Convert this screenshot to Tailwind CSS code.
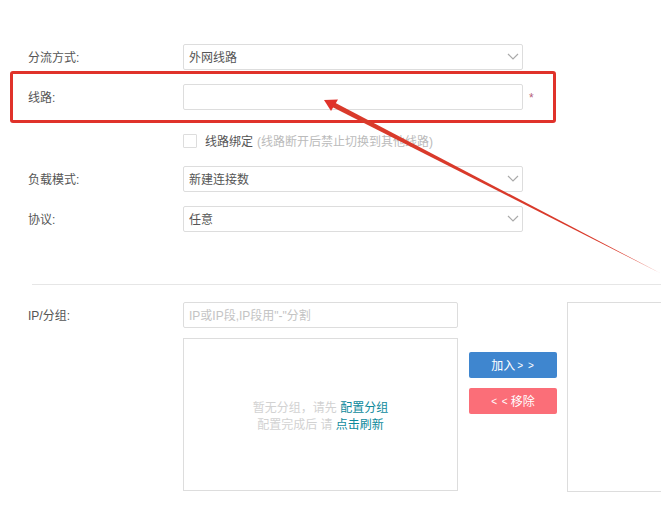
<!DOCTYPE html>
<html lang="zh-CN">
<head>
  <meta charset="UTF-8">
  <title>线路</title>
  <script src="https://cdn.jsdelivr.net/npm/@tailwindcss/browser@4"></script>
</head>
<body class="bg-white overflow-hidden font-['Liberation_Sans','Noto_Sans_CJK_SC',sans-serif] text-xs text-[#555]">
  <div class="relative w-[661px] h-[526px] overflow-hidden pt-[44px]">
    <!-- Top form -->
    <div class="flex items-center h-[26px] pl-[28px]">
      <label class="w-[155px] pt-[2px]">分流方式:</label>
      <div class="w-[340px] h-[26px] border border-[#ddd] rounded-[2px] flex items-center justify-between pl-[5px] pr-[3px]">
        <span class="pt-[2px]">外网线路</span>
        <svg class="w-[12px] h-[8px]" viewBox="0 0 12 8" fill="none" stroke="#aaa" stroke-width="1.2"><path d="M1 1l5 5 5-5"/></svg>
      </div>
    </div>
    <div class="flex items-center h-[26px] pl-[28px] mt-[14px]">
      <label class="w-[155px] pt-[2px]">线路:</label>
      <div class="w-[340px] h-[26px] border border-[#ddd] rounded-[2px]"></div>
      <span class="ml-[6px] text-[#b5607a] mt-[1px]">*</span>
    </div>
    <div class="flex items-center h-[14px] pl-[183px] mt-[24px]">
      <div class="w-[14px] h-[14px] border border-[#ddd] rounded-[1px]"></div>
      <span class="ml-[8px] pt-[2px]">线路绑定</span>
      <span class="ml-[4px] pt-[2px] text-[#bbb]">(线路断开后禁止切换到其他线路)</span>
    </div>
    <div class="flex items-center h-[26px] pl-[28px] mt-[18px]">
      <label class="w-[155px] pt-[2px]">负载模式:</label>
      <div class="w-[340px] h-[26px] border border-[#ddd] rounded-[2px] flex items-center justify-between pl-[5px] pr-[3px]">
        <span class="pt-[2px]">新建连接数</span>
        <svg class="w-[12px] h-[8px]" viewBox="0 0 12 8" fill="none" stroke="#aaa" stroke-width="1.2"><path d="M1 1l5 5 5-5"/></svg>
      </div>
    </div>
    <div class="flex items-center h-[26px] pl-[28px] mt-[14px]">
      <label class="w-[155px] pt-[2px]">协议:</label>
      <div class="w-[340px] h-[26px] border border-[#ddd] rounded-[2px] flex items-center justify-between pl-[5px] pr-[3px]">
        <span class="pt-[2px]">任意</span>
        <svg class="w-[12px] h-[8px]" viewBox="0 0 12 8" fill="none" stroke="#aaa" stroke-width="1.2"><path d="M1 1l5 5 5-5"/></svg>
      </div>
    </div>

    <div class="ml-[32px] mt-[52px] h-px bg-[#e6e6e6]"></div>

    <!-- IP / group -->
    <div class="flex pl-[28px] mt-[17px]">
      <label class="w-[155px] h-[26px] leading-[28px] shrink-0">IP/分组:</label>
      <div class="w-[275px] shrink-0">
        <div class="h-[26px] border border-[#ddd] rounded-[2px] px-[5px] leading-[26px] text-[#c4c4c4]">IP或IP段,IP段用"-"分割</div>
        <div class="h-[153px] mt-[10px] border border-[#ddd] flex flex-col items-center justify-center text-[#d2d2d2] leading-[17px] pt-[5px]">
          <div>暂无分组，请先 <span class="text-[#0e8a9c]">配置分组</span></div>
          <div>配置完成后 请 <span class="text-[#0e8a9c]">点击刷新</span></div>
        </div>
      </div>
      <div class="w-[88px] ml-[11px] mt-[50px] shrink-0">
        <div class="h-[26px] rounded-[2px] bg-[#3f86cf] text-white flex items-center justify-center pt-[2px]">加入<span class="ml-[2px] text-[10px] tracking-[1px]">&gt; &gt;</span></div>
        <div class="h-[26px] mt-[10px] rounded-[2px] bg-[#fb6e78] text-white flex items-center justify-center pt-[2px]"><span class="mr-[2px] text-[10px] tracking-[1px]">&lt; &lt;</span>移除</div>
      </div>
      <div class="w-[120px] h-[190px] ml-[10px] border border-[#ddd] shrink-0"></div>
    </div>

    <!-- Annotation overlay -->
    <div class="absolute left-[10px] top-[71px] w-[546px] h-[52px] border-[3px] border-[#e0322a] rounded-[3px]"></div>
    <svg class="absolute left-0 top-0 pointer-events-none" width="661" height="526" viewBox="0 0 661 526">
      <path d="M661 273.5L333.2 101.8L330.8 106.2Z" fill="#d93a2b"/>
      <path d="M324 100L338 99.5L331 111Z" fill="#e0322a"/>
    </svg>
  </div>
</body>
</html>
